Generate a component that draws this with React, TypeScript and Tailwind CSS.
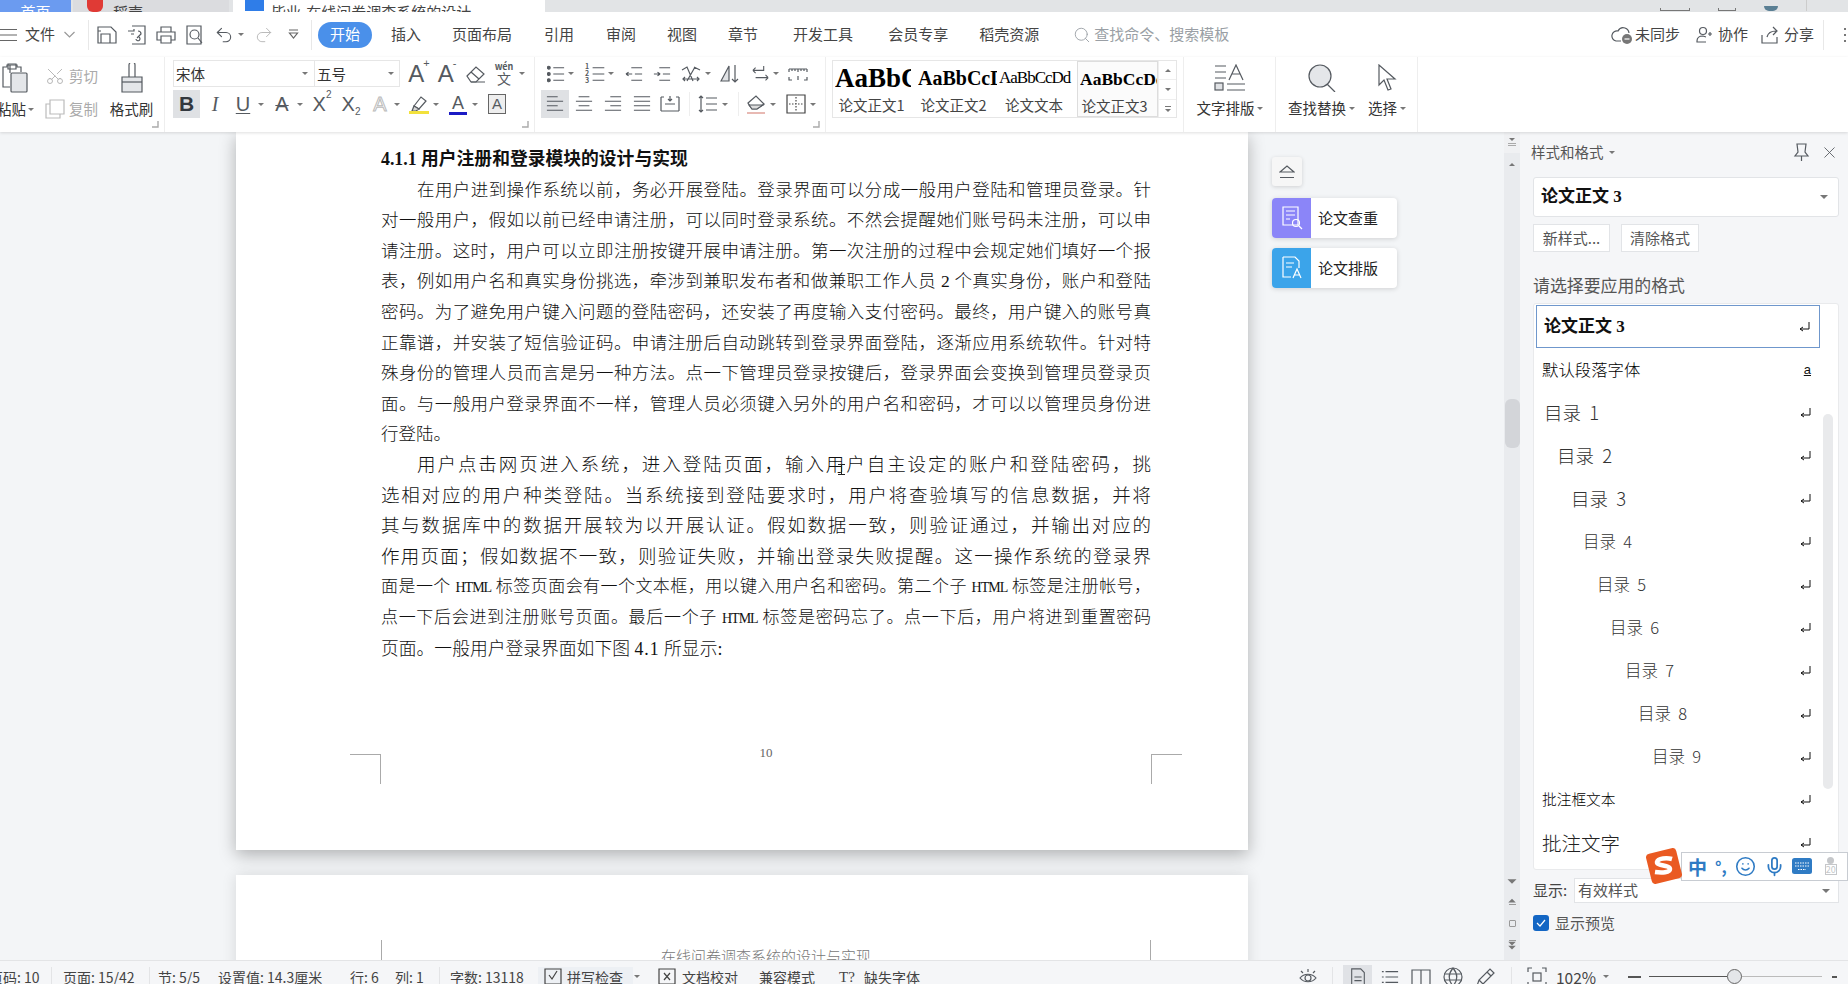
import type { ReactNode } from "react";
import { Mic, Redo2, Scissors, Search, Smile, Undo2, X } from "lucide-react";

const Ic = ({ w = 20, h = 20, vb = "0 0 20 20", s = "#555a60", sw = 1.2, children, className = "" }: { w?: number; h?: number; vb?: string; s?: string; sw?: number; children: ReactNode; className?: string }) => (
  <svg width={w} height={h} viewBox={vb} fill="none" stroke={s} strokeWidth={sw} className={`shrink-0 ${className}`}>
    {children}
  </svg>
);

const Tri = ({ className = "" }: { className?: string }) => (
  <span className={`inline-block shrink-0 w-0 h-0 border-x-[3px] border-x-transparent border-t-[3px] border-t-[#777] ${className}`} />
);

const Launcher = () => (
  <svg width="7" height="7" viewBox="0 0 7 7" className="absolute right-[5px] bottom-[4px]" fill="none" stroke="#aaa" strokeWidth="1.4">
    <path d="M6 0v6H0" />
  </svg>
);

const tabs = [
  { t: "插入", c: "ml-[19px]" },
  { t: "页面布局", c: "ml-[31px]" },
  { t: "引用", c: "ml-[32px]" },
  { t: "审阅", c: "ml-[32px]" },
  { t: "视图", c: "ml-[31px]" },
  { t: "章节", c: "ml-[31px]" },
  { t: "开发工具", c: "ml-[35px]" },
  { t: "会员专享", c: "ml-[35px]" },
  { t: "稻壳资源", c: "ml-[31px]" },
];

const TabStrip = () => (
  <div className="h-[12px] bg-[#e2e4e6] flex overflow-hidden text-[15px] leading-[20px] text-[#444] items-end shrink-0">
    <div className="w-[71px] h-full bg-[#6b9bf0] flex items-end justify-center text-white">
      <span className="-mb-[10px]">首页</span>
    </div>
    <div className="ml-[2px] w-[156px] h-full bg-[#dbdcdf] flex items-end pl-[14px] gap-[10px]">
      <span className="w-[16px] h-[12px] bg-[#e03a35] rounded-b-[6px]" />
      <span className="-mb-[10px]">稻壳</span>
    </div>
    <div className="ml-[4px] w-[312px] h-full bg-white flex items-end pl-[12px] gap-[7px]">
      <span className="w-[19px] h-[11px] mb-[1px] bg-[#2f7de8]" />
      <span className="-mb-[10px]">毕业-在线问卷调查系统的设计</span>
    </div>
    <div className="flex-1" />
    <div className="w-[188px] h-full flex items-end gap-[28px] pb-[1px]">
      <span className="w-[30px] h-[3px] border-x border-b border-[#777]" />
      <span className="w-[18px] h-[3px] border-x border-b border-[#777]" />
      <span className="w-[14px] h-[5px] rounded-b-full bg-[#5a7f94]" />
      <span className="w-px h-[12px] bg-[#ccc]" />
    </div>
  </div>
);

const MenuBar = () => (
  <div className="h-[45px] bg-white flex items-center shrink-0 text-[15px] text-[#444]">
    <Ic w={18} h={14} vb="0 0 18 14" className="-ml-[1px]" s="#666">
      <path d="M0 1.5h18M0 7h18M0 12.5h18" />
    </Ic>
    <span className="ml-[8px]">文件</span>
    <Ic w={11} h={7} vb="0 0 11 7" s="#999" className="ml-[9px]">
      <path d="M.5 1l5 5 5-5" />
    </Ic>
    <span className="ml-[13px] w-px h-[30px] bg-[#e8e8e8]" />
    <Ic className="ml-[8px]">
      <path d="M1 2h13l5 5v11H1zM4 18V9h9v9M1 6h3" />
    </Ic>
    <Ic className="ml-[10px]">
      <path d="M5 1h13v18H5M1 6h6v-2m0 5H4M11 6a3 3 0 0 1 3 3l-4 4m-1 1a2 2 0 1 0 3-2" />
    </Ic>
    <Ic className="ml-[9px]">
      <path d="M5 7V2h10v5M5 15H1V7h18v8h-4M5 11h10v7H5z" />
    </Ic>
    <Ic className="ml-[9px]">
      <path d="M2 1h14v18H2z" />
      <circle cx="9.5" cy="9.5" r="4.5" />
      <path d="M13 13l4 5" />
    </Ic>
    <Undo2 size={20} strokeWidth={1.3} color="#555a60" className="ml-[9px] shrink-0" />
    <Tri className="ml-[4px]" />
    <Redo2 size={20} strokeWidth={1.2} color="#bbb" className="ml-[10px] shrink-0" />
    <Ic w={11} h={11} vb="0 0 11 11" s="#666" className="ml-[14px]">
      <path d="M1 1h9M1.5 4h8l-4 5z" />
    </Ic>
    <span className="ml-[12px] w-px h-[30px] bg-[#e8e8e8]" />
    <span className="ml-[6px] w-[54px] h-[26px] rounded-full bg-[#4a90ea] text-white flex items-center justify-center">开始</span>
    {tabs.map((x) => (
      <span key={x.t} className={x.c}>
        {x.t}
      </span>
    ))}
    <Search size={18} strokeWidth={1.2} color="#9a9fa5" className="ml-[34px] shrink-0" />
    <span className="ml-[3px] text-[#9a9fa5]">查找命令、搜索模板</span>
    <div className="ml-auto flex items-center">
      <Ic w={22} h={20} vb="0 0 22 20" s="#555a60">
        <path d="M14 3a6 6 0 0 0-7 3 5 5 0 0 0-2 10h5M14 3a6 6 0 0 1 4 5" />
        <circle cx="16" cy="14" r="5" fill="#777" stroke="none" />
        <path d="M13.500 14h5" stroke="#fff" />
      </Ic>
      <span className="ml-[2px]">未同步</span>
      <Ic w={18} h={18} vb="0 0 18 18" className="ml-[15px]">
        <circle cx="8" cy="5" r="3.500" />
        <path d="M2 15c0-4 3-5 6-5l3 1M2 15v1h9M13 8h4M15 6v4" />
      </Ic>
      <span className="ml-[5px]">协作</span>
      <Ic w={18} h={18} vb="0 0 18 18" className="ml-[13px]">
        <path d="M1 9v8h15v-6M6 11c1-4 4-6 9-6M12 1l4 4-4 4" />
      </Ic>
      <span className="ml-[5px]">分享</span>
      <span className="ml-[9px] w-px h-[30px] bg-[#e8e8e8]" />
      <Ic w={4} h={18} vb="0 0 4 18" s="#777" sw={2} className="ml-[19px]">
        <path d="M2 2v2M2 8v2M2 14v2" />
      </Ic>
      <span className="w-[1px]" />
    </div>
  </div>
);

const Lines = ({ kind }: { kind: "l" | "c" | "r" | "j" }) => {
  const d = {
    l: "M1 2h12M1 7h18M1 12h12M1 17h18",
    c: "M4 2h12M1 7h18M4 12h12M1 17h18",
    r: "M7 2h12M1 7h18M7 12h12M1 17h18",
    j: "M1 2h18M1 7h18M1 12h18M1 17h18",
  }[kind];
  return (
    <Ic w={18} h={18} vb="0 0 20 20">
      <path d={d} />
    </Ic>
  );
};

const ClipboardGroup = () => (
  <div className="relative w-[165px] border-r border-[#eee] flex pt-[6px] shrink-0 overflow-hidden">
    <div className="w-[41px] flex flex-col">
      <Ic w={26} h={30} vb="0 0 26 30" s="#555a60" className="ml-[2px]">
        <path d="M8 10V2H5v2H1v20h7M5 2h10v2h4v5" />
        <rect x="9" y="10" width="16" height="19" fill="#e4e6e9" rx="1" />
        <path d="M6 1h8v5H6z" />
      </Ic>
      <div className="mt-[6px] -ml-[3px] flex items-center text-[14.5px] text-[#333] h-[20px] whitespace-nowrap">
        粘贴
        <Tri className="ml-[2px]" />
      </div>
    </div>
    <div className="w-[64px] ml-[4px] flex flex-col text-[14.5px] text-[#aaa]">
      <div className="flex items-center h-[26px]">
        <Scissors size={20} strokeWidth={1} color="#aaa" className="shrink-0 -rotate-90" />
        <span className="ml-[4px]">剪切</span>
      </div>
      <div className="flex items-center h-[26px] mt-[7px]">
        <Ic w={20} h={20} s="#bbb">
          <path d="M5 1h14v14H5zM5 5H1v14h14v-4" />
        </Ic>
        <span className="ml-[4px]">复制</span>
      </div>
    </div>
    <div className="w-[43px] ml-[1px] flex flex-col items-center">
      <Ic w={24} h={30} vb="0 0 24 30" s="#555a60">
        <path d="M9 14V2a3 3 0 0 1 6 0v12" />
        <path d="M2 14h20v15H2z" fill="#e4e6e9" />
        <path d="M2 19h20" />
      </Ic>
      <span className="mt-[6px] text-[14.5px] text-[#333] h-[20px] leading-[20px] whitespace-nowrap">格式刷</span>
    </div>
    <Launcher />
  </div>
);

const Letter = ({ children, className = "" }: { children: ReactNode; className?: string }) => (
  <span className={`flex items-center justify-center text-[20px] leading-none text-[#555a60] font-['Liberation_Sans',sans-serif] shrink-0 ${className}`}>{children}</span>
);

const FontGroup = () => (
  <div className="relative w-[370px] border-r border-[#eee] pt-[3px] pl-[8px] shrink-0">
    <div className="flex items-center h-[27px]">
      <div className="w-[142px] h-full border border-[#e6e6e6] flex items-center pl-[2px] text-[14.5px] text-[#333]">
        宋体
        <Tri className="ml-auto mr-[6px]" />
      </div>
      <div className="w-[85px] h-full border border-l-0 border-[#e6e6e6] flex items-center pl-[2px] text-[14.5px] text-[#333]">
        五号
        <Tri className="ml-auto mr-[5px]" />
      </div>
      <Letter className="ml-[9px] w-[20px] font-light text-[24px]">
        A<sup className="text-[11px] -ml-[1px] -mt-[10px]">+</sup>
      </Letter>
      <Letter className="ml-[8px] w-[20px] font-light text-[24px]">
        A<sup className="text-[11px] -ml-[1px] -mt-[10px]">-</sup>
      </Letter>
      <Ic w={20} h={20} className="ml-[9px]">
        <path d="M1 12l9-9 8 7-8 8H5z" />
        <path d="M5 8l8 7M5 18h14" />
      </Ic>
      <div className="ml-[8px] w-[20px] flex flex-col items-center text-[#555a60]">
        <span className="text-[9px] leading-[9px] font-semibold">wén</span>
        <span className="text-[14px] leading-[14px]">文</span>
      </div>
      <Tri className="ml-[5px]" />
    </div>
    <div className="flex items-center h-[28px] mt-[3px]">
      <span className="w-[27px] h-full bg-[#dfe1e4] flex items-center justify-center text-[21px] font-bold text-[#33383e] font-['Liberation_Sans',sans-serif] shrink-0">B</span>
      <Letter className="ml-[8px] w-[14px] italic font-['Liberation_Serif',serif]!">I</Letter>
      <Letter className="ml-[12px] w-[18px] underline decoration-1 underline-offset-2">U</Letter>
      <Tri className="ml-[6px]" />
      <Letter className="ml-[8px] w-[20px] line-through decoration-1 font-light">A</Letter>
      <Tri className="ml-[5px]" />
      <Letter className="ml-[7px] w-[24px] font-light">
        X<sup className="text-[10px] -mt-[8px]">2</sup>
      </Letter>
      <Letter className="ml-[6px] w-[22px] font-light">
        X<sub className="text-[10px] mt-[10px]">2</sub>
      </Letter>
      <span className="ml-[9px] w-[18px] text-[20px] text-center text-white font-['Liberation_Sans',sans-serif] [-webkit-text-stroke:1px_#bbb] shrink-0">A</span>
      <Tri className="ml-[5px]" />
      <Ic w={20} h={20} className="ml-[9px]">
        <path d="M5 12l7-9 5 4-7 8z" />
        <path d="M5 12l5 3-3 2H3z" fill="#d6d6d6" />
        <path d="M0 18.500h20" stroke="#f2e13c" strokeWidth="3" />
      </Ic>
      <Tri className="ml-[4px]" />
      <div className="ml-[9px] w-[20px] flex flex-col items-center shrink-0">
        <span className="text-[18px] leading-[18px] font-light text-[#555a60] font-['Liberation_Sans',sans-serif]">A</span>
        <span className="w-[18px] h-[3px] bg-[#1b1bc4]" />
      </div>
      <Tri className="ml-[4px]" />
      <span className="ml-[10px] w-[18px] h-[20px] border border-[#666] bg-[#eee] text-[15px] leading-[18px] text-center text-[#555a60] font-['Liberation_Sans',sans-serif] shrink-0">A</span>
    </div>
    <Launcher />
  </div>
);

const ParagraphGroup = () => (
  <div className="relative w-[291px] border-r border-[#eee] pt-[3px] pl-[6px] shrink-0">
    <div className="flex items-center h-[27px]">
      <Ic w={18} h={18} className="ml-[6px]">
        <path d="M7 3h12M7 10h12M7 17h12" />
        <circle cx="2" cy="3" r="1.600" fill="#555a60" />
        <circle cx="2" cy="10" r="1.600" fill="#555a60" />
        <circle cx="2" cy="17" r="1.600" fill="#555a60" />
      </Ic>
      <Tri className="ml-[3px]" />
      <div className="ml-[11px] w-[20px] flex shrink-0 items-center">
        <span className="text-[7px] leading-[7px] font-bold text-[#555a60] text-center">1<br />2<br />3</span>
        <Ic w={14} h={18} vb="0 0 14 20" className="ml-[2px]">
          <path d="M1 3h13M1 10h13M1 17h13" />
        </Ic>
      </div>
      <Tri className="ml-[3px]" />
      <Ic w={20} h={18} className="ml-[10px]">
        <path d="M7 3h12M11 10h8M7 17h12M1 10h7M1 10l3-2M1 10l3 2" />
      </Ic>
      <Ic w={20} h={18} className="ml-[8px]">
        <path d="M7 3h12M11 10h8M7 17h12M1 10h7M8 10l-3-2M8 10l-3 2" />
      </Ic>
      <Ic w={20} h={20} className="ml-[9px]">
        <path d="M1 6l5-3 6 14M13 3l6 3M14 3l-8 14M3 15h14M16 13l2 2-2 2M4 13l-2 2 2 2" />
      </Ic>
      <Tri className="ml-[4px]" />
      <Ic w={20} h={20} className="ml-[9px]">
        <path d="M1 17L9 2v15z" fill="#e0e2e5" />
        <path d="M15 1v17M12 15l3 3 3-3" />
      </Ic>
      <Ic w={18} h={20} className="ml-[12px]">
        <path d="M1 6h12V1M1 6l3-3M1 6l3 3M4 14h14M18 14l-3-3M18 14l-3 3" />
      </Ic>
      <Tri className="ml-[3px]" />
      <Ic w={20} h={14} vb="0 0 20 14" className="ml-[9px]">
        <path d="M1 2h18M1 2v3M4 2v2M7 2v2M10 2v3M13 2v2M16 2v2M19 2v3M1 10v3h3M19 10v3h-3M10 9v4" />
      </Ic>
    </div>
    <div className="flex items-center h-[28px] mt-[3px]">
      <span className="w-[28px] h-full bg-[#dfe1e4] flex items-center justify-center shrink-0">
        <Lines kind="l" />
      </span>
      <span className="ml-[6px]"><Lines kind="c" /></span>
      <span className="ml-[11px]"><Lines kind="r" /></span>
      <span className="ml-[11px]"><Lines kind="j" /></span>
      <Ic w={20} h={20} className="ml-[9px]">
        <path d="M1 3v14M19 3v14M1 3h3M16 3h3M1 17h18M5 10h10M10 2v5M8 5l2 2 2-2" />
      </Ic>
      <span className="ml-[9px] w-px h-[24px] bg-[#eee]" />
      <Ic w={20} h={20} className="ml-[8px]">
        <path d="M3 2v16M1 4l2-2 2 2M1 16l2 2 2-2M8 4h11M8 10h11M8 16h11" />
      </Ic>
      <Tri className="ml-[4px]" />
      <span className="ml-[10px] w-px h-[24px] bg-[#eee]" />
      <Ic w={20} h={20} className="ml-[7px]">
        <path d="M2 9l8-7 8 8-7 5H6z" />
        <path d="M3 11h14l-6 4H6z" fill="#ddd" />
        <path d="M1 19h18" stroke="#d98a80" />
      </Ic>
      <Tri className="ml-[4px]" />
      <Ic w={20} h={20} className="ml-[10px]" s="#444">
        <path d="M1 1h18v18H1z" />
        <path d="M10 3v14M3 10h14" strokeDasharray="1.500 1.500" />
      </Ic>
      <Tri className="ml-[4px]" />
    </div>
    <Launcher />
  </div>
);

const styleSamples = [
  { preview: "AaBbCcDd", label: "论文正文1", c: "w-[83px]", fc: "text-[27px] font-bold pr-[5px]" },
  { preview: "AaBbCcDd", label: "论文正文2", c: "w-[81px]", fc: "text-[20px] font-bold" },
  { preview: "AaBbCcDd", label: "论文文本", c: "w-[80px]", fc: "text-[17px] tracking-[-1px]" },
  { preview: "AaBbCcDd", label: "论文正文3", c: "w-[81px] border border-[#ddd] bg-[#fbfbfb]", fc: "text-[17.5px] font-bold" },
];

const Gallery = () => (
  <div className="ml-[6px] mt-[3px] w-[345px] h-[58px] border border-[#e6e6e6] flex shrink-0">
    {styleSamples.map((g) => (
      <div key={g.label} className={`${g.c} h-full flex flex-col items-center overflow-hidden shrink-0`}>
        <div className={`h-[34px] w-full pl-[2px] flex items-center justify-center overflow-hidden whitespace-nowrap text-black font-['Liberation_Serif',serif] ${g.fc}`}>
          <span className="block w-full overflow-hidden">{g.preview}</span>
        </div>
        <span className="pr-[6px] text-[14.5px] text-[#444] leading-[20px] whitespace-nowrap">{g.label}</span>
      </div>
    ))}
    <div className="ml-auto w-[19px] border-l border-[#eee] flex flex-col">
      <span className="h-[19px] flex items-center justify-center border-b border-[#eee]">
        <Tri className="rotate-180" />
      </span>
      <span className="h-[20px] flex items-center justify-center border-b border-[#eee]">
        <Tri />
      </span>
      <span className="flex-1 flex flex-col items-center justify-center">
        <span className="w-[6px] h-px bg-[#777]" />
        <Tri className="mt-[2px]" />
      </span>
    </div>
  </div>
);

const Ribbon = () => (
  <div className="relative z-10 h-[75px] bg-white flex shadow-[0_1px_3px_rgba(0,0,0,0.13)] shrink-0">
    <ClipboardGroup />
    <FontGroup />
    <ParagraphGroup />
    <Gallery />
    <div className="ml-[6px] w-[93px] border-l border-r border-[#eee] flex flex-col items-center pt-[7px] shrink-0">
      <Ic w={32} h={28} vb="0 0 32 28">
        <path d="M1 2h11M1 8h11M1 14h11M13 20h18M13 26h18" />
        <rect x="1" y="19" width="8" height="7" fill="#e0e2e5" />
        <path d="M15 16L22 1l7 15M18 10h8" />
      </Ic>
      <div className="mt-[6px] text-[14.5px] text-[#333] leading-[20px] flex items-center whitespace-nowrap">
        文字排版
        <Tri className="ml-[2px]" />
      </div>
    </div>
    <div className="w-[142px] border-r border-[#eee] flex shrink-0 pt-[7px]">
      <div className="w-[81px] ml-[5px] flex flex-col items-center">
        <Ic w={28} h={28} vb="0 0 28 28" s="#555a60">
          <circle cx="12" cy="12" r="11" fill="#e4e6e9" />
          <path d="M19 20l8 8" />
        </Ic>
        <div className="mt-[6px] text-[14.5px] text-[#333] leading-[20px] flex items-center whitespace-nowrap">
          查找替换
          <Tri className="ml-[3px]" />
        </div>
      </div>
      <div className="ml-[6px] flex flex-col items-center">
        <Ic w={20} h={28} vb="0 0 20 28">
          <path d="M2 1v20l5-5 4 10 3-1-4-10h8z" />
        </Ic>
        <div className="mt-[6px] text-[14.5px] text-[#333] leading-[20px] flex items-center whitespace-nowrap">
          选择
          <Tri className="ml-[3px]" />
        </div>
      </div>
    </div>
  </div>
);

const para1 = [
  "在用户进到操作系统以前，务必开展登陆。登录界面可以分成一般用户登陆和管理员登录。针",
  "对一般用户，假如以前已经申请注册，可以同时登录系统。不然会提醒她们账号码未注册，可以申",
  "请注册。这时，用户可以立即注册按键开展申请注册。第一次注册的过程中会规定她们填好一个报",
  "表，例如用户名和真实身份挑选，牵涉到兼职发布者和做兼职工作人员 2 个真实身份，账户和登陆",
  "密码。为了避免用户键入问题的登陆密码，还安装了再度输入支付密码。最终，用户键入的账号真",
  "正靠谱，并安装了短信验证码。申请注册后自动跳转到登录界面登陆，逐渐应用系统软件。针对特",
  "殊身份的管理人员而言是另一种方法。点一下管理员登录按键后，登录界面会变换到管理员登录页",
  "面。与一般用户登录界面不一样，管理人员必须键入另外的用户名和密码，才可以以管理员身份进",
];

const para2 = [
  "选相对应的用户种类登陆。当系统接到登陆要求时，用户将查验填写的信息数据，并将",
  "其与数据库中的数据开展较为以开展认证。假如数据一致，则验证通过，并输出对应的",
  "作用页面；假如数据不一致，则验证失败，并输出登录失败提醒。这一操作系统的登录界",
];

const Line = ({ children, indent, last, size = "" }: { children: ReactNode; indent?: boolean; last?: boolean; size?: string }) => (
  <div className={`h-[30.6px] leading-[30.6px] whitespace-nowrap ${size} ${indent ? "pl-[36px]" : ""} ${last ? "" : "[text-align-last:justify]"}`}>{children}</div>
);

const Html = () => <span className="text-[14px] tracking-[-1px]">HTML</span>;

const Document = () => (
  <div className="w-[1504px] h-full overflow-hidden flex shrink-0 bg-[#f3f5f7]">
    <div className="ml-[236px] w-[1012px] shrink-0 flex flex-col">
      <div className="h-[718px] bg-white shadow-[0_5px_16px_rgba(0,0,0,0.28)] pl-[145px] pr-[97px] pt-[12px] shrink-0 text-[17.5px] font-light text-[#111] font-['Liberation_Serif','Noto_Sans_CJK_SC',serif]">
        <div className="h-[30.6px] leading-[30.6px] text-[17.8px] font-bold whitespace-nowrap">4.1.1 用户注册和登录模块的设计与实现</div>
        {para1.map((l, i) => (
          <Line key={l} indent={i === 0}>
            {l}
          </Line>
        ))}
        <Line last>行登陆。</Line>
        <Line indent size="text-[18.5px]">用户点击网页进入系统，进入登陆页面，输入用户自主设定的账户和登陆密码，挑</Line>
        {para2.map((l) => (
          <Line key={l} size="text-[18.5px]">{l}</Line>
        ))}
        <Line size="text-[17px]">
          面是一个 <Html /> 标签页面会有一个文本框，用以键入用户名和密码。第二个子 <Html /> 标签是注册帐号，
        </Line>
        <Line size="text-[17px]">
          点一下后会进到注册账号页面。最后一个子 <Html /> 标签是密码忘了。点一下后，用户将进到重置密码
        </Line>
        <Line last size="text-[17.8px]">
          页面。一般用户登录界面如下图 <span className="tracking-[1px]">4.1</span> 所显示:
        </Line>
        <div className="mt-[90px] -mx-[31px] flex justify-between items-start">
          <span className="w-[31px] h-[30px] border-t border-r border-[#aaa]" />
          <span className="text-[13px] leading-[13px] -mt-[8px] text-[#666] font-['Liberation_Serif',serif]">10</span>
          <span className="w-[31px] h-[30px] border-t border-l border-[#aaa]" />
        </div>
      </div>
      <div className="mt-[25px] h-[100px] bg-white shadow-[0_0_14px_rgba(0,0,0,0.12)] pl-[145px] pr-[97px] pt-[65px] shrink-0">
        <div className="h-[20px] border-x border-[#aaa] flex justify-center text-[15px] leading-[20px] pt-[6px] font-light text-[#777] overflow-hidden">
          在线问卷调查系统的设计与实现
        </div>
      </div>
    </div>
    <div className="ml-[24px] w-[125px] pt-[25px] shrink-0 flex flex-col">
      <div className="w-[30px] h-[29px] bg-[#f6f6f6] rounded-[3px] shadow-[0_1px_4px_rgba(0,0,0,0.15)] flex items-center justify-center">
        <Ic w={16} h={14} vb="0 0 16 14" s="#555a60">
          <path d="M1 7l7-6 7 6zM1 12.500h14" />
        </Ic>
      </div>
      <div className="mt-[12px] h-[40px] bg-white rounded-[4px] shadow-[0_1px_5px_rgba(0,0,0,0.15)] flex items-center overflow-hidden text-[15px] text-[#222]">
        <span className="w-[39px] h-full bg-[#8b85f8] flex items-center justify-center">
          <Ic w={22} h={24} vb="0 0 22 24" s="#fff">
            <path d="M2 1h15v18H2zM5 5h9M5 9h9M5 13h4" />
            <circle cx="15" cy="17" r="3.500" />
            <path d="M18 20l3 3" />
          </Ic>
        </span>
        <span className="ml-[7px]">论文查重</span>
      </div>
      <div className="mt-[10px] h-[40px] bg-white rounded-[4px] shadow-[0_1px_5px_rgba(0,0,0,0.15)] flex items-center overflow-hidden text-[15px] text-[#222]">
        <span className="w-[39px] h-full bg-[#3ba4ea] flex items-center justify-center">
          <Ic w={22} h={24} vb="0 0 22 24" s="#fff">
            <path d="M2 1h12l4 4v7M2 1v20h8M5 7h8M5 11h6" />
            <path d="M12 22l4-9 4 9M13.500 19h5" />
          </Ic>
        </span>
        <span className="ml-[7px]">论文排版</span>
      </div>
    </div>
  </div>
);

const ScrollColumn = () => (
  <div className="w-[16px] h-full bg-[#e9ebee] flex flex-col items-center shrink-0 text-[#999]">
    <div className="w-full h-[21px] bg-[#f0f1f3] flex flex-col items-center pt-[6px]">
      <Tri />
      <span className="w-[8px] h-[3px] mt-[2px] border-y border-[#aaa]" />
    </div>
    <Tri className="rotate-180 mt-[10px]" />
    <div className="mt-[233px] w-[15px] h-[49px] rounded-[6px] bg-[#d3d5d9]" />
    <div className="flex-1" />
    <Tri className="scale-150" />
    <div className="mt-[16px] flex flex-col items-center">
      <Tri className="rotate-180 scale-125" />
      <span className="w-[7px] h-[3px] border-b border-[#999]" />
    </div>
    <span className="mt-[15px] w-[7px] h-[7px] border border-[#999] rounded-[1px]" />
    <div className="mt-[13px] mb-[11px] flex flex-col items-center">
      <span className="w-[7px] h-[2px] border-t border-[#999]" />
      <Tri className="scale-125" />
      <Tri className="scale-125 mt-[1px]" />
    </div>
  </div>
);

const styles = [
  { t: "默认段落字体", c: "pl-[6px] text-[16.4px] font-light text-black" },
  { t: "目录  1", c: "pl-[8px] text-[18.5px] font-light text-[#333]" },
  { t: "目录  2", c: "pl-[21px] text-[18.5px] font-light text-[#333]" },
  { t: "目录  3", c: "pl-[35px] text-[18.5px] font-light text-[#333]" },
  { t: "目录  4", c: "pl-[47px] text-[16.5px] font-light text-[#333]" },
  { t: "目录  5", c: "pl-[61px] text-[16.5px] font-light text-[#333]" },
  { t: "目录  6", c: "pl-[74px] text-[16.5px] font-light text-[#333]" },
  { t: "目录  7", c: "pl-[89px] text-[16.5px] font-light text-[#333]" },
  { t: "目录  8", c: "pl-[102px] text-[16.5px] font-light text-[#333]" },
  { t: "目录  9", c: "pl-[116px] text-[16.5px] font-light text-[#333]" },
  { t: "批注框文本", c: "pl-[6px] text-[14.7px] font-light text-black" },
  { t: "批注文字", c: "pl-[6px] text-[19.5px] font-light text-[#222]" },
];

const Enter = () => (
  <Ic w={11} h={12} vb="0 0 11 12" s="#111" sw={1} className="shrink-0">
    <path d="M10 1v7H1M1 8l3-2M1 8l3 2" />
  </Ic>
);

const SidePanel = () => (
  <div className="flex-1 h-full bg-[#f5f6f8] pl-[13px] pr-[15px] flex flex-col text-[#444]">
    <div className="h-[40px] flex items-center text-[14.5px] text-[#555] whitespace-nowrap">
      <span className="-ml-[2px]">样式和格式</span>
      <Tri className="ml-[5px]" />
      <Ic w={17} h={18} vb="0 0 17 18" className="ml-[178px]">
        <path d="M4 1h9l-1 8 3 4H2l3-4zM8.500 13v5" />
      </Ic>
      <X size={19} strokeWidth={1.1} color="#555a60" className="ml-[10px] shrink-0" />
    </div>
    <div className="mt-[5px] h-[40px] bg-white border border-[#e2e4e7] rounded-[3px] flex items-center pl-[7px] pr-[10px] text-[17px] font-bold text-[#111] font-['Liberation_Serif','Noto_Sans_CJK_SC',serif]">
      论文正文 3
      <Tri className="ml-auto border-x-[4px] border-t-[4px]" />
    </div>
    <div className="mt-[7px] flex text-[15px] text-[#555] gap-[11px]">
      <span className="w-[77px] h-[28px] bg-white border border-[#e2e4e7] flex items-center justify-center">新样式...</span>
      <span className="w-[78px] h-[28px] bg-white border border-[#e2e4e7] flex items-center justify-center">清除格式</span>
    </div>
    <div className="mt-[23px] h-[20px] leading-[20px] text-[16.9px] text-[#555]">请选择要应用的格式</div>
    <div className="mt-[8px] h-[567px] bg-white border border-[#e9eaec] rounded-[3px] flex shrink-0 overflow-hidden">
      <div className="ml-[2px] mt-[1px] w-[284px] shrink-0 flex flex-col">
        <div className="h-[43px] border border-[#6f97cc] flex items-center pl-[7px] pr-[9px] text-[17px] font-bold text-[#111] font-['Liberation_Serif','Noto_Sans_CJK_SC',serif]">
          论文正文 3
          <span className="ml-auto"><Enter /></span>
        </div>
        {styles.map((s, i) => (
          <div key={s.t} className={`h-[43px] flex items-center pr-[9px] whitespace-pre ${s.c}`}>
            {s.t}
            <span className="ml-auto">
              {i === 0 ? <span className="block text-[13px] leading-[14px] underline font-['Liberation_Sans',sans-serif] font-normal text-[#111]">a</span> : <Enter />}
            </span>
          </div>
        ))}
      </div>
      <div className="ml-[3px] mt-[110px] w-[10px] h-[375px] rounded-[5px] bg-[#e9eaec] shrink-0" />
    </div>
    <div className="mt-[8px] h-[25px] flex items-center text-[15px] shrink-0">
      <span className="w-[41px] text-[#444]">显示:</span>
      <div className="flex-1 h-full bg-white border border-[#e2e4e7] flex items-center pl-[3px] pr-[8px] text-[#555]">
        有效样式
        <Tri className="ml-auto border-x-[4px] border-t-[4px]" />
      </div>
    </div>
    <div className="mt-[12px] h-[16px] flex items-center text-[15px] text-[#555]">
      <span className="w-[16px] h-[16px] rounded-[3px] bg-[#1366c4] flex items-center justify-center">
        <Ic w={10} h={8} vb="0 0 10 8" s="#fff">
          <path d="M1 4l3 3 5-6" />
        </Ic>
      </span>
      <span className="ml-[6px]">显示预览</span>
    </div>
  </div>
);

const Ime = () => (
  <div className="absolute left-[1646px] top-[848px] flex items-center">
    <svg width="36" height="36" viewBox="0 0 36 36" className="shrink-0 z-10">
      <rect x="2.500" y="2.500" width="31" height="31" rx="4" fill="#ea5a22" transform="rotate(-14 18 18)" />
      <path d="M26 11c-5-1.500-14-1-15 3-.5 4 13 3 13 7 0 3.500-8 4-15 3" fill="none" stroke="#fff" strokeWidth="4.500" />
    </svg>
    <div className="-ml-[1px] w-[167px] h-[29px] bg-white border border-[#c8ccd2] flex items-center pl-[6px] text-[#2f7bc4] overflow-hidden">
      <span className="text-[19px] font-bold leading-none">中</span>
      <span className="ml-[8px] text-[16px] font-bold leading-none whitespace-pre">°,</span>
      <Smile size={21} strokeWidth={1.8} className="ml-[8px] shrink-0" />
      <Mic size={21} strokeWidth={2} className="ml-[8px] shrink-0" />
      <Ic w={20} h={16} vb="0 0 20 16" s="#fff" sw={1.200} className="ml-[7px]">
        <rect x="0" y="0" width="20" height="16" rx="2.500" fill="#2f7bc4" stroke="none" />
        <path d="M3 5h14M3 8h14M6 11.500h8" strokeDasharray="1.500 1" />
      </Ic>
      <span className="ml-[8px] w-[22px] flex flex-col items-center text-[#c5c7ca]">
        <span className="w-[7px] h-[7px] rounded-full bg-[#c5c7ca]" />
        <span className="text-[9px] leading-[9px] border border-[#c5c7ca]">20</span>
      </span>
    </div>
  </div>
);

const StatusBar = () => (
  <div className="h-[24px] bg-[#f5f6f8] border-t border-[#e3e4e6] flex items-start pt-[6px] text-[14px] leading-[20px] text-[#444] whitespace-nowrap overflow-hidden shrink-0">
    <div className="-ml-[11px] w-[63px] h-[19px] border-r border-[#e3e4e6] shrink-0">页码: 10</div>
    <div className="w-[98px] h-[19px] pl-[11px] border-r border-[#e3e4e6] shrink-0">页面: 15/42</div>
    <div className="w-[68px] pl-[8px] shrink-0">节: 5/5</div>
    <div className="w-[132px] shrink-0">设置值: 14.3厘米</div>
    <div className="w-[45px] shrink-0">行: 6</div>
    <div className="w-[45px] h-[19px] border-r border-[#e3e4e6] shrink-0">列: 1</div>
    <div className="w-[98px] pl-[10px] shrink-0">字数: 13118</div>
    <div className="w-[95px] h-[19px] bg-[#edf0f4] pl-[6px] flex items-center shrink-0">
      <Ic w={18} h={17} vb="0 0 18 17" s="#444">
        <path d="M1 1h16v15H1zM5 7l3 4 5-8" />
      </Ic>
      <span className="ml-[5px]">拼写检查</span>
    </div>
    <Tri className="ml-[1px] mt-[8px]" />
    <div className="ml-[18px] flex items-center shrink-0 h-[19px]">
      <Ic w={18} h={17} vb="0 0 18 17" s="#444">
        <path d="M1 1h16v15H1zM6 5l6 7M12 5l-6 7" />
      </Ic>
      <span className="ml-[6px]">文档校对</span>
    </div>
    <div className="ml-[21px] shrink-0">兼容模式</div>
    <div className="ml-[24px] flex items-center shrink-0 h-[19px]">
      <span className="text-[15px] font-['Liberation_Serif',serif] text-[#444] w-[25px]">T?</span>
      <span>缺失字体</span>
    </div>
    <div className="ml-auto w-[550px] flex items-center shrink-0 h-[19px]">
      <Ic w={20} h={20} vb="0 0 20 20">
        <path d="M2 11c4-5 12-5 16 0-4 5-12 5-16 0zM3 4l2 2M10 2v3M17 4l-2 2" />
        <circle cx="10" cy="11" r="3" />
      </Ic>
      <span className="ml-[14px] w-px h-[19px] bg-[#e3e4e6]" />
      <span className="ml-[10px] w-[29px] h-[24px] bg-[#e0e2e6] flex items-center justify-center shrink-0">
        <Ic w={18} h={20}>
          <path d="M3 1h10l4 4v14H3zM6 10h8M6 14h8" />
        </Ic>
      </span>
      <Ic w={20} h={18} className="ml-[8px]">
        <path d="M5 4h14M5 10h14M5 16h14M1 4h2M1 10h2M1 16h2" />
      </Ic>
      <Ic w={20} h={20} className="ml-[11px]">
        <path d="M10 3H1v16h9V3zm0 0h9v16h-9" />
      </Ic>
      <Ic w={20} h={20} className="ml-[12px]">
        <circle cx="10" cy="10" r="9" />
        <path d="M1 7h18M1 13h18M10 1c-5 6-5 12 0 18M10 1c5 6 5 12 0 18" />
      </Ic>
      <Ic w={20} h={20} className="ml-[13px]">
        <path d="M1 19l2-6L14 2l4 4L7 17zM3 13l4 4M11 5l4 4" />
      </Ic>
      <span className="ml-[15px] w-px h-[19px] bg-[#e3e4e6]" />
      <Ic w={20} h={20} className="ml-[15px]">
        <path d="M1 5V1h4M15 1h4v4M19 15v4h-4M5 19H1v-4" />
        <rect x="6" y="6" width="8" height="8" />
      </Ic>
      <span className="ml-[9px] text-[15.5px]">102%</span>
      <Tri className="ml-[7px]" />
      <span className="ml-[19px] w-[13px] h-[2px] bg-[#555]" />
      <div className="ml-[8px] w-[173px] h-px bg-[#bbb] flex items-center">
        <span className="block w-[78px] h-px bg-[#555]" />
        <span className="w-[15px] h-[15px] rounded-full bg-[#e4e6e9] border border-[#666] shrink-0" />
      </div>
      <span className="ml-[10px] w-[5px] h-[2px] bg-[#555]" />
    </div>
  </div>
);

export default function App() {
  return (
    <div className="relative w-[1848px] h-[984px] overflow-hidden flex flex-col bg-white font-['Noto_Sans_CJK_SC','Noto_Sans',sans-serif]">
      <TabStrip />
      <MenuBar />
      <Ribbon />
      <div className="flex-1 min-h-0 flex">
        <Document />
        <ScrollColumn />
        <SidePanel />
      </div>
      <StatusBar />
      <Ime />
      <svg width="9" height="11" viewBox="0 0 9 11" fill="none" stroke="#222" strokeWidth="1" className="absolute left-[837px] top-[464px]">
        <path d="M1 .5h7M4.500.5v10M1 10.500h7" />
      </svg>
    </div>
  );
}
